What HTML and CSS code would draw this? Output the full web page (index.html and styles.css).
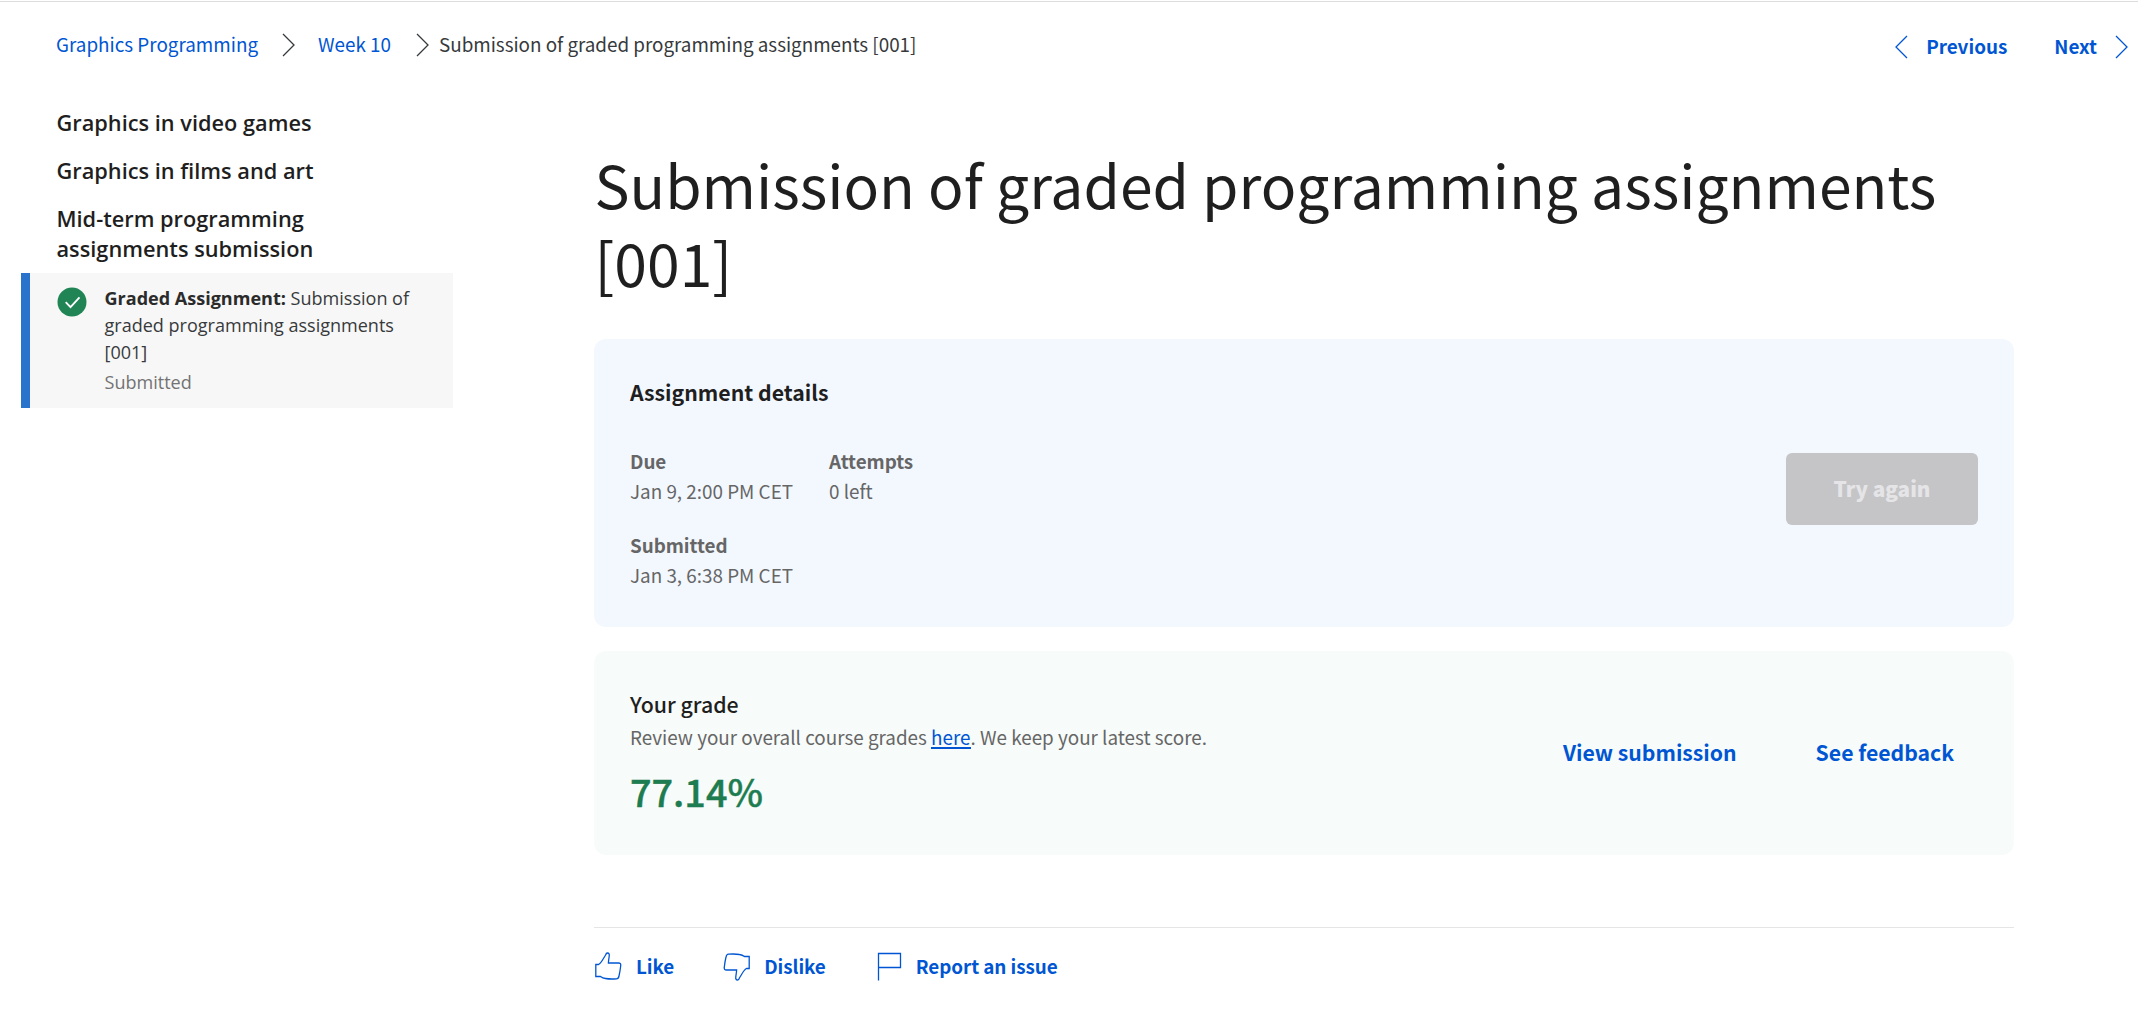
FILE: index.html
```
<!DOCTYPE html>
<html lang="en">
<head>
<meta charset="utf-8">
<title>Submission of graded programming assignments [001]</title>
<link rel="stylesheet" href="styles.css">
</head>
<body>
<header class="topbar">
  <nav class="breadcrumbs">
    <a class="crumb crumb-course" href="#">Graphics Programming</a>
    <svg class="chevron" viewBox="0 0 14 24"><path d="M1 1l11 11L1 23"/></svg>
    <a class="crumb crumb-week" href="#">Week 10</a>
    <svg class="chevron" viewBox="0 0 14 24"><path d="M1 1l11 11L1 23"/></svg>
    <span class="crumb-current">Submission of graded programming assignments [001]</span>
  </nav>
  <nav class="pager">
    <a class="pager-link" href="#"><svg class="chevron" viewBox="0 0 14 24"><path d="M13 1L2 12l11 11"/></svg>Previous</a>
    <a class="pager-link" href="#">Next<svg class="chevron" viewBox="0 0 14 24"><path d="M1 1l11 11L1 23"/></svg></a>
  </nav>
</header>
<div class="layout">
  <aside class="sidebar">
    <h2 class="module">Graphics in video games</h2>
    <h2 class="module">Graphics in films and art</h2>
    <h2 class="module">Mid-term programming assignments submission</h2>
    <a class="lesson" href="#">
      <svg class="check" viewBox="0 0 30 30"><circle cx="15" cy="15" r="14.5"/><path d="M8.7 15.2l4.8 4.9 9-9.8"/></svg>
      <div class="lesson-body">
        <p class="lesson-name"><strong>Graded Assignment:</strong> Submission of graded programming assignments [001]</p>
        <p class="lesson-status">Submitted</p>
      </div>
    </a>
  </aside>
  <main class="content">
    <h1 class="title">Submission of graded programming assignments [001]</h1>
    <section class="card card-details">
      <div class="details">
        <h2 class="card-heading">Assignment details</h2>
        <dl class="facts">
          <div><dt>Due</dt><dd>Jan 9, 2:00 PM CET</dd></div>
          <div><dt>Attempts</dt><dd>0 left</dd></div>
          <div><dt>Submitted</dt><dd>Jan 3, 6:38 PM CET</dd></div>
        </dl>
      </div>
      <button class="retry" disabled>Try again</button>
    </section>
    <section class="card card-grade">
      <div class="grade">
        <h2 class="grade-heading">Your grade</h2>
        <p class="grade-note">Review your overall course grades <a href="#">here</a>. We keep your latest score.</p>
        <p class="grade-value">77.14%</p>
      </div>
      <div class="grade-actions">
        <a href="#">View submission</a>
        <a href="#">See feedback</a>
      </div>
    </section>
    <footer class="feedback">
      <a href="#"><svg viewBox="0 0 28 30"><path d="M.8 13.5H3.5C6.500 12 8.500 7 10.600 4C11 2.600 11.400 2 12.400 2C14 2 14.500 3.400 14.200 5C14 8 13.400 9.500 13.400 12H23.500C25.300 12 26 13 25.700 14.800C25.300 18.500 24.700 22 24 25C23.600 27 22.900 27.700 21.500 27.800C18 28.100 13.500 28 10.500 27.500C8 27.200 6.800 26.500 5.500 25.500H.8Z"/></svg>Like</a>
      <a href="#"><svg viewBox="0 0 28 30"><path d="M26.200 17.500H23.500C20.500 19 18.500 24 16.400 27C16 28.400 15.600 29 14.600 29C13 29 12.500 27.600 12.800 26C13 23 13.600 21.500 13.600 19H3.500C1.700 19 1 18 1.300 16.200C1.700 12.500 2.300 9 3 6C3.400 4 4.100 3.300 5.500 3.200C9 2.900 13.500 3 16.500 3.500C19 3.800 20.200 4.500 21.500 5.500H26.200Z"/></svg>Dislike</a>
      <a href="#"><svg viewBox="0 0 28 30"><path d="M3.500 29.500V2.500H25.500V16.500H3.500"/></svg>Report an issue</a>
    </footer>
  </main>
</div>
</body>
</html>
```
FILE: styles.css
```
* { box-sizing: border-box; margin: 0; padding: 0; }
body {
  background: #fff;
  color: #1f1f1f;
  font: 18.85px/30px "Noto Sans CJK SC", "Noto Sans", sans-serif;
  padding-top: 1px;
  overflow: hidden;
}
a { color: #0056d2; text-decoration: none; }
svg { display: block; flex: none; fill: none; stroke: currentColor; stroke-width: 1.3; }

.topbar {
  display: flex;
  justify-content: space-between;
  height: 106px;
  padding: 27px 9px 0 56px;
  border-top: 1px solid #ddd;
}
.breadcrumbs { display: flex; align-items: flex-start; color: #373a3c; }
.chevron { width: 14px; height: 24px; margin-top: 4px; }
.crumb-course { width: 226px; }
.crumb-week { width: 98px; margin-left: 22px; }
.crumb-current { margin-left: 9px; letter-spacing: -.02px; }
.pager { display: flex; gap: 47px; padding-top: 2px; font-weight: 700; }
.pager-link { display: flex; align-items: flex-start; gap: 18px; }

.layout { display: flex; }
.sidebar { width: 453px; padding: 1px 0 0 21px; font-family: "Open Sans", sans-serif; }
.module {
  width: 340px;
  padding: 0 40px 0 35.5px;
  margin-bottom: 18px;
  font-size: 21.75px;
  font-weight: 600;
  line-height: 30px;
}
.lesson {
  display: flex;
  gap: 17.5px;
  height: 135px;
  margin-top: -9px;
  padding: 12px 30px 0 27px;
  border-left: 9px solid #2a73cc;
  background: #f7f7f7;
  color: #373a3c;
  font-size: 18.05px;
  line-height: 27px;
}
.check { width: 30px; height: 30px; margin-top: 2px; }
.check circle { fill: #208454; stroke: none; }
.check path { stroke: #fff; stroke-width: 1.9; }
.lesson strong { color: #2b2b2b; }
.lesson-status { padding-top: 3px; color: #737373; }

.content { width: 1420px; margin-left: 141px; padding-top: 38px; }
.title { padding-left: .5px; font-size: 58.8px; font-weight: 400; line-height: 77.5px; margin-bottom: 39px; }
.card { display: flex; justify-content: space-between; border-radius: 12px; padding: 38px 36px 0; }
.card-details { height: 288px; background: #f3f8ff; }
.card-heading { font-size: 21.25px; font-weight: 700; }
.facts { display: grid; grid-template-columns: 199px 199px; row-gap: 24px; padding-top: 39px; color: #666; }
.facts dt { font-weight: 700; letter-spacing: -.05px; }
.retry {
  width: 192px;
  height: 72px;
  margin-top: 76px;
  padding-bottom: 2px;
  border: 0;
  border-radius: 6px;
  background: #c5c5c7;
  color: #e5e5e8;
  font: 900 20.7px/30px "Noto Sans CJK SC", sans-serif;
}
.card-grade { height: 204px; margin-top: 24px; background: #f7fbfa; }
.grade-heading { font-size: 21.3px; font-weight: 500; }
.grade-note { padding-top: 3px; color: #666; }
.grade-note a { border-bottom: 2px solid #0056d2; display: inline-block; line-height: 26px; height: 25px; }
.grade-value {
  padding-top: 12px;
  font-size: 37.8px;
  font-weight: 500;
  line-height: 54px;
  color: #1d7c50;
  -webkit-text-stroke: .4px #1d7c50;
}
.grade-actions { display: flex; gap: 79px; padding: 48px 24px 0 0; font-size: 21.2px; font-weight: 700; }
.feedback { display: flex; gap: 48px; margin-top: 72px; padding-top: 23px; border-top: 1px solid #e5e5e5; font-weight: 700; letter-spacing: -.06px; }
.feedback a { display: flex; gap: 13px; }
.feedback svg { width: 28px; height: 30px; margin-left: 1px; }
```
